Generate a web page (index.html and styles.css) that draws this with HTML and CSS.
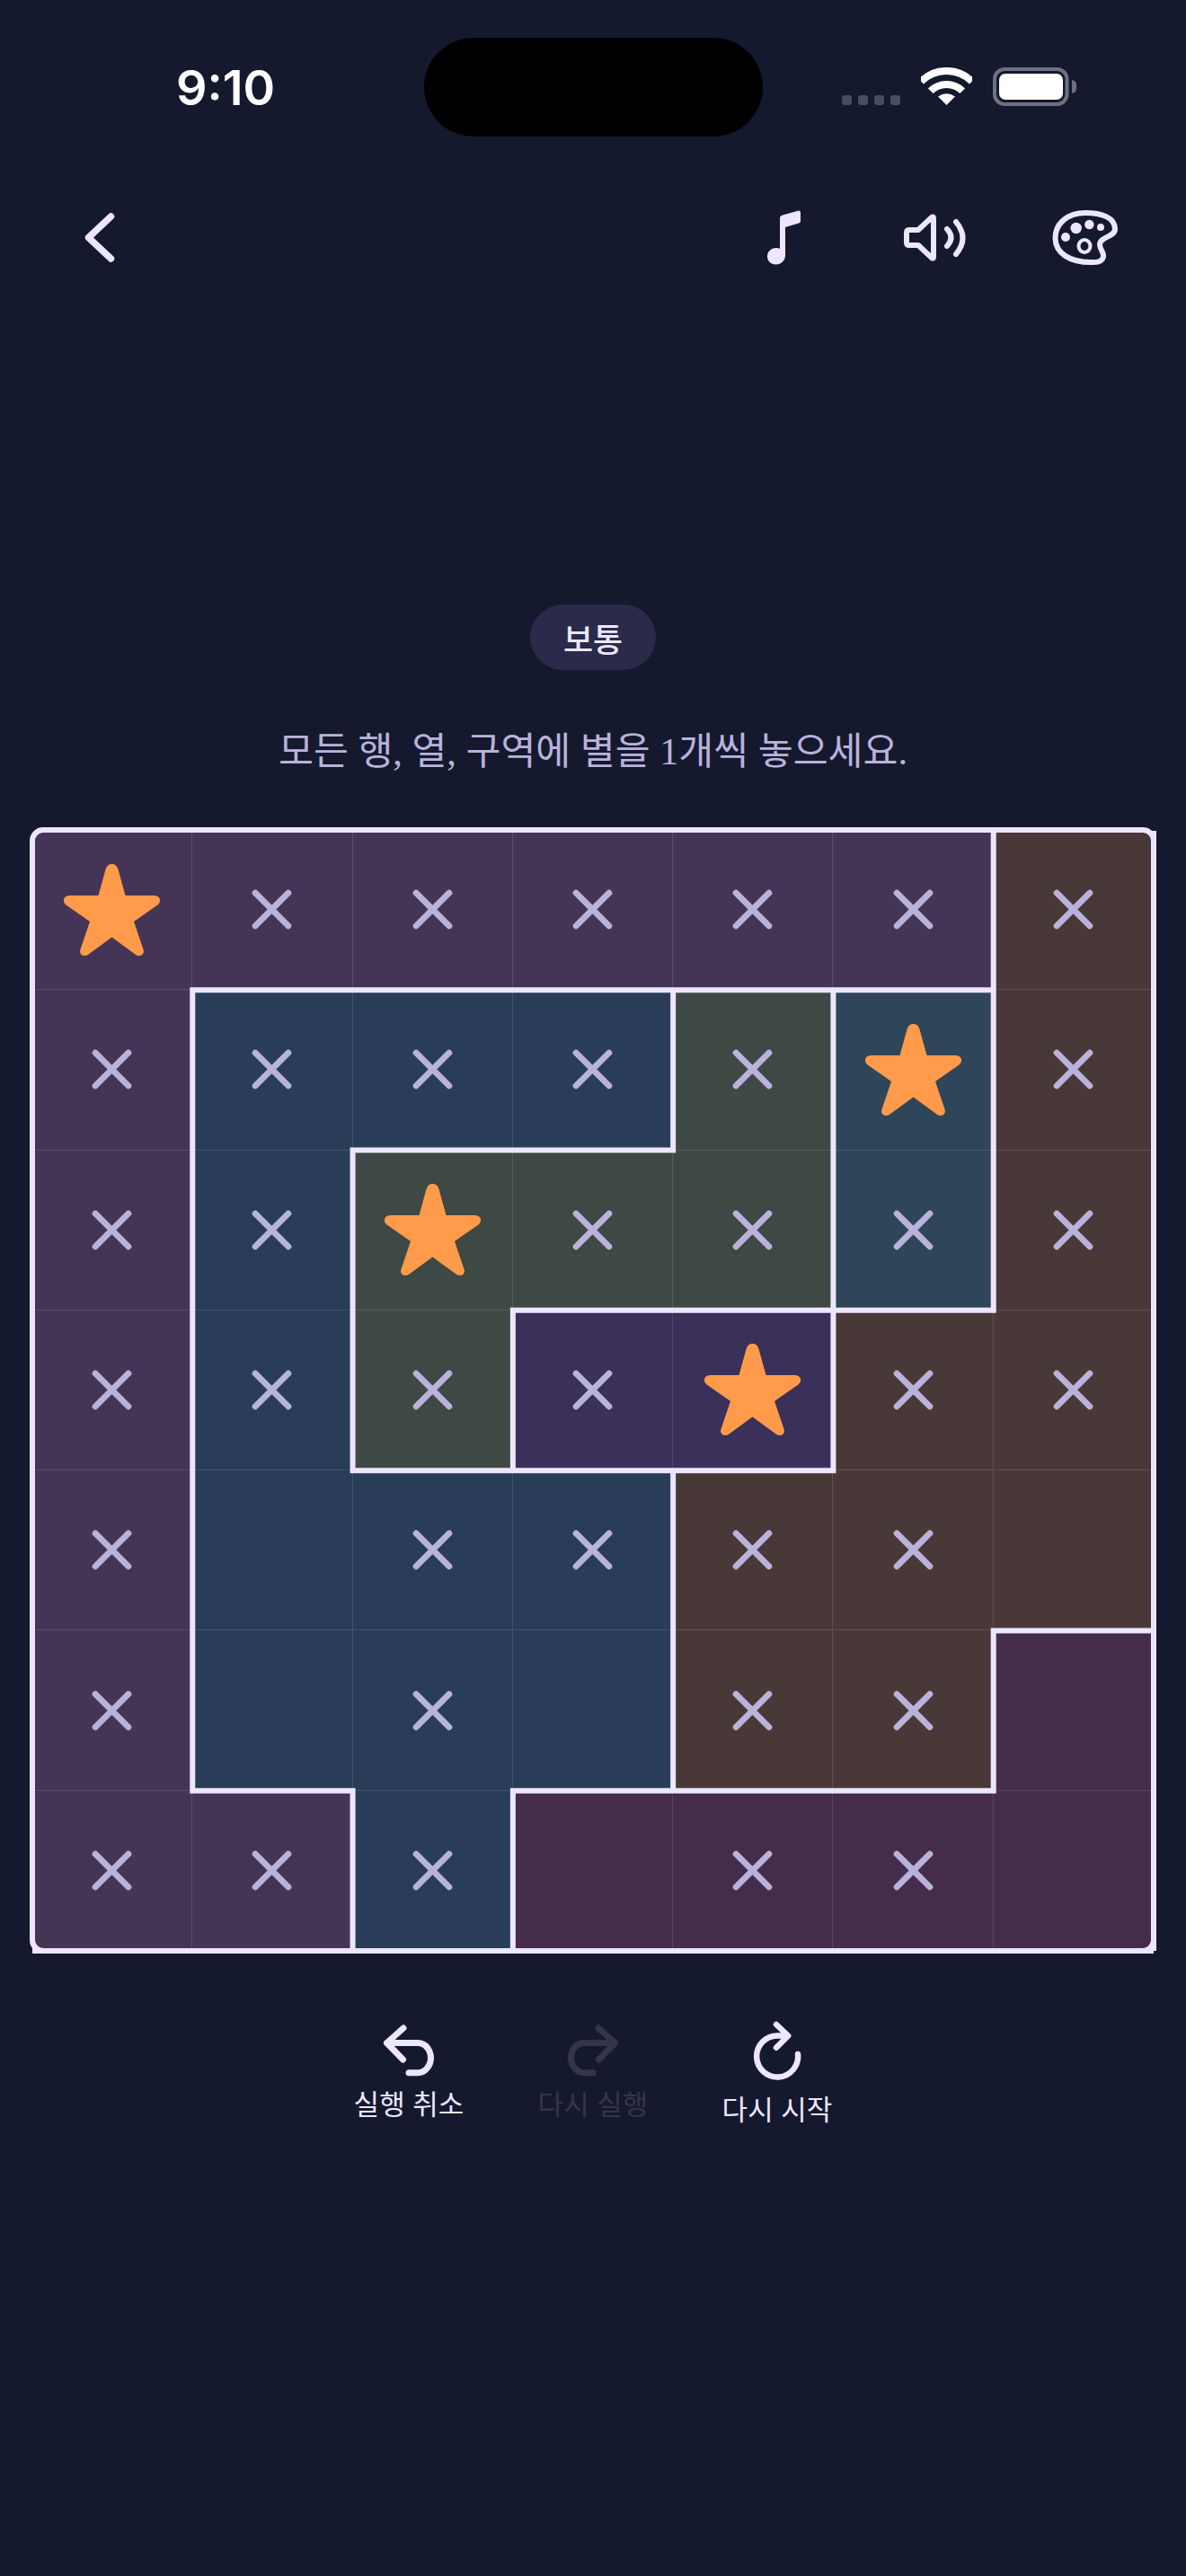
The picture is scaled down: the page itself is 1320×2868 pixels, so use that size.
FILE: index.html
```html
<!DOCTYPE html>
<html lang="ko">
<head>
<meta charset="utf-8">
<title>별 퍼즐</title>
<link rel="stylesheet" href="styles.css">
</head>
<body>
<svg class="defs" width="0" height="0" aria-hidden="true">
  <symbol id="x" viewBox="0 0 50 50"><path d="M7 7 L43 43 M43 7 L7 43" fill="none" stroke="currentColor" stroke-width="6.8" stroke-linecap="round"/></symbol>
  <symbol id="star" viewBox="0 0 107 102"><path d="M46.500 6 C48 1.500 50.500 0 53.500 0 C56.500 0 59 1.500 60.500 6 L68.500 35 H100 C107 35 109.500 41 104.500 45.500 L78 64 L88.500 95 C90.500 101 84.500 104 79.500 100.500 L53.500 81.500 L27.500 100.500 C22.500 104 16.500 101 18.500 95 L29 64 L2.500 45.500 C-2.500 41 0 35 7 35 H38.500 Z" fill="currentColor"/></symbol>
</svg>

<div class="status">
  <div class="time-slot"><span class="time">9:10</span></div>
  <div class="island"></div>
  <div class="status-icons">
    <div class="signal"><i></i><i></i><i></i><i></i></div>
    <svg class="wifi" viewBox="0 0 57 42"><path d="M0.2 15.7 A40 40 0 0 1 56.8 15.7 M10.8 26.3 A25 25 0 0 1 46.2 26.3" fill="none" stroke="#fff" stroke-width="8"/><path d="M28.5 42 L19 32.5 Q28.5 26 38 32.5 Z" fill="#fff"/></svg>
    <svg class="battery" viewBox="0 0 93 43"><rect x="2" y="2" width="80.500" height="39" rx="11" fill="none" stroke="#6f7183" stroke-width="4"/><rect x="7" y="7" width="71" height="29" rx="7" fill="#fff"/><path d="M88 14 Q93 15 93 19 V24 Q93 28 88 29 Z" fill="#6f7183"/></svg>
  </div>
</div>

<div class="toolbar">
  <svg class="tool tool-back" viewBox="0 0 84 84"><path d="M54.500 19 L29.500 42.500 L54.500 66" class="ln" stroke-width="7.500"/></svg>
  <svg class="tool tool-music" viewBox="0 0 84 84"><path d="M38 21 Q38 18 41 17.500 L58 12.700 Q61 12 61 15 V24 Q61 26 59 26.500 L44 31 V62 C44 68 39.500 72.500 33.500 72.500 C28 72.500 24 68.500 24 63.500 C24 58 28.500 54 34 54 Q36.500 54 38 55 Z" fill="#ece6ff"/></svg>
  <svg class="tool tool-sound" viewBox="0 0 84 84"><path d="M14 34 H24 L39 20 Q41 18.500 41 21 V64 Q41 66.500 39 65 L24 51 H14 Q11 51 11 48 V37 Q11 34 14 34 Z" class="ln" stroke-width="6"/><path d="M56 33 Q65 42.500 56 52 M66 25 Q81 43 66 61" class="ln" stroke-width="6"/></svg>
  <svg class="tool tool-palette" viewBox="0 0 84 84"><path d="M8.500 43 C8.500 26 23 15 42 15 C60 15 75 20 75 33 C75 42 59 41 58 50 C58 56 63 59 62 64 C61 69 55 70.500 48 70 C25 70 8.500 60 8.500 43 Z" class="ln" stroke-width="6"/><circle cx="20" cy="42" r="5" fill="#ece6ff"/><circle cx="31.700" cy="32" r="6.200" fill="#ece6ff"/><circle cx="46.400" cy="28" r="5.200" fill="#ece6ff"/><circle cx="59" cy="31" r="4" fill="#ece6ff"/><ellipse cx="41" cy="52" rx="6.500" ry="7" class="ln" stroke-width="4"/></svg>
</div>

<main class="main">
  <div class="pill">보통</div>
  <p class="prompt">모든 행, 열, 구역에 별을 1개씩 놓으세요.</p>

  <div class="board">
    <div class="grid">
      <div class="cell a tl"><svg class="star"><use href="#star"/></svg></div>
      <div class="cell a"><svg class="x"><use href="#x"/></svg></div>
      <div class="cell a"><svg class="x"><use href="#x"/></svg></div>
      <div class="cell a"><svg class="x"><use href="#x"/></svg></div>
      <div class="cell a"><svg class="x"><use href="#x"/></svg></div>
      <div class="cell a"><svg class="x"><use href="#x"/></svg></div>
      <div class="cell b tr"><svg class="x"><use href="#x"/></svg></div>

      <div class="cell a"><svg class="x"><use href="#x"/></svg></div>
      <div class="cell c"><svg class="x"><use href="#x"/></svg></div>
      <div class="cell c"><svg class="x"><use href="#x"/></svg></div>
      <div class="cell c"><svg class="x"><use href="#x"/></svg></div>
      <div class="cell d"><svg class="x"><use href="#x"/></svg></div>
      <div class="cell e"><svg class="star"><use href="#star"/></svg></div>
      <div class="cell b"><svg class="x"><use href="#x"/></svg></div>

      <div class="cell a"><svg class="x"><use href="#x"/></svg></div>
      <div class="cell c"><svg class="x"><use href="#x"/></svg></div>
      <div class="cell d"><svg class="star"><use href="#star"/></svg></div>
      <div class="cell d"><svg class="x"><use href="#x"/></svg></div>
      <div class="cell d"><svg class="x"><use href="#x"/></svg></div>
      <div class="cell e"><svg class="x"><use href="#x"/></svg></div>
      <div class="cell b"><svg class="x"><use href="#x"/></svg></div>

      <div class="cell a"><svg class="x"><use href="#x"/></svg></div>
      <div class="cell c"><svg class="x"><use href="#x"/></svg></div>
      <div class="cell d"><svg class="x"><use href="#x"/></svg></div>
      <div class="cell f"><svg class="x"><use href="#x"/></svg></div>
      <div class="cell f"><svg class="star"><use href="#star"/></svg></div>
      <div class="cell b"><svg class="x"><use href="#x"/></svg></div>
      <div class="cell b"><svg class="x"><use href="#x"/></svg></div>

      <div class="cell a"><svg class="x"><use href="#x"/></svg></div>
      <div class="cell c"></div>
      <div class="cell c"><svg class="x"><use href="#x"/></svg></div>
      <div class="cell c"><svg class="x"><use href="#x"/></svg></div>
      <div class="cell b"><svg class="x"><use href="#x"/></svg></div>
      <div class="cell b"><svg class="x"><use href="#x"/></svg></div>
      <div class="cell b"></div>

      <div class="cell a"><svg class="x"><use href="#x"/></svg></div>
      <div class="cell c"></div>
      <div class="cell c"><svg class="x"><use href="#x"/></svg></div>
      <div class="cell c"></div>
      <div class="cell b"><svg class="x"><use href="#x"/></svg></div>
      <div class="cell b"><svg class="x"><use href="#x"/></svg></div>
      <div class="cell g"></div>

      <div class="cell a bl"><svg class="x"><use href="#x"/></svg></div>
      <div class="cell a"><svg class="x"><use href="#x"/></svg></div>
      <div class="cell c"><svg class="x"><use href="#x"/></svg></div>
      <div class="cell g"></div>
      <div class="cell g"><svg class="x"><use href="#x"/></svg></div>
      <div class="cell g"><svg class="x"><use href="#x"/></svg></div>
      <div class="cell g br"></div>
    </div>
    <svg class="regions" viewBox="0 0 7 7" preserveAspectRatio="none">
      <path d="M1 1H6 M2 2H4 M3 3H6 M2 4H5 M6 5H7 M1 6H2 M3 6H6 M1 1V6 M2 2V4 M2 6V7 M3 3V4 M3 6V7 M4 1V2 M4 4V6 M5 1V4 M6 0V3 M6 5V6"/>
    </svg>
    <div class="frame"></div>
    <div class="edge edge-right"></div>
    <div class="edge edge-bottom"></div>
  </div>

  <div class="controls">
    <button class="ctl">
      <svg class="ctl-icon" viewBox="0 0 84 72"><path d="M36 11 L17.500 27.500 L35.500 46 M17.500 27.500 H52 C61 27.500 66.500 36 66.500 44 C66.500 53 60 60.700 52 60.700 H42" class="ln" stroke-width="7"/></svg>
      <span>실행 취소</span>
    </button>
    <button class="ctl ctl-off">
      <svg class="ctl-icon" viewBox="0 0 84 72"><path d="M48 11 L66.500 27.500 L48.500 46 M66.500 27.500 H32 C23 27.500 17.500 36 17.500 44 C17.500 53 24 60.700 32 60.700 H42" class="ln-off" stroke-width="7"/></svg>
      <span>다시 실행</span>
    </button>
    <button class="ctl">
      <svg class="ctl-icon ctl-tall" viewBox="0 0 84 78"><path d="M41 7 L54.200 19.500 L41 32.700 M54 19.500 H42 A23 23 0 1 0 65 40" class="ln" stroke-width="6.500"/></svg>
      <span>다시 시작</span>
    </button>
  </div>
</main>
</body>
</html>
```
FILE: styles.css
```css
* { box-sizing: border-box; }
html, body { margin: 0; padding: 0; }
body {
  width: 1320px;
  height: 2868px;
  overflow: hidden;
  background: #15192e;
  color: #ece6ff;
  font-family: "Inter", "Noto Sans CJK KR", sans-serif;
}
.defs { position: absolute; }

.ln { fill: none; stroke: #ece6ff; stroke-linecap: round; stroke-linejoin: round; }
.ln-off { fill: none; stroke: #33344e; stroke-linecap: round; stroke-linejoin: round; }

.status { display: flex; height: 152px; padding-top: 42px; }
.time-slot { width: 472px; padding-left: 196px; padding-top: 2px; display: flex; align-items: center; }
.time { font-size: 54px; font-weight: 600; line-height: 110px; color: #fff; letter-spacing: 0; }
.island { width: 377px; height: 110px; border-radius: 55px; background: #000; }
.status-icons { position: relative; flex: 1; height: 110px; }
.signal { position: absolute; left: 88px; top: 64px; display: flex; gap: 7px; }
.signal i { width: 11px; height: 11px; border-radius: 3px; background: #4a4d60; }
.wifi { position: absolute; left: 176px; top: 33px; width: 57px; height: 42px; }
.battery { position: absolute; left: 256px; top: 33px; width: 93px; height: 43px; }

.toolbar { display: flex; gap: 84px; height: 84px; margin-top: 70px; padding: 0 70px 0 69px; }
.tool { width: 84px; height: 84px; }
.tool-back { margin-right: auto; }

.main { display: flex; flex-direction: column; align-items: center; }
.pill {
  margin-top: 367px;
  width: 140px;
  height: 73px;
  border-radius: 37px;
  background: #2a2b4a;
  display: flex;
  align-items: center;
  justify-content: center;
  font-family: "Noto Sans CJK KR", sans-serif;
  font-size: 36px;
  font-weight: 500;
}
.prompt {
  margin: 63px 0 0;
  height: 56px;
  line-height: 56px;
  font-family: "Liberation Serif", "Noto Sans CJK KR", serif;
  font-size: 42.3px;
  color: #b9b3db;
  white-space: nowrap;
}

.board { position: relative; width: 1248px; height: 1248px; margin-top: 59px; align-self: flex-start; margin-left: 36px; }
.grid { display: grid; grid-template-columns: repeat(7, 1fr); grid-template-rows: repeat(7, 1fr); width: 100%; height: 100%; }
.cell {
  display: flex;
  align-items: center;
  justify-content: center;
  border-right: 1px solid rgba(255, 255, 255, .12);
  border-bottom: 1px solid rgba(255, 255, 255, .12);
}
.a { background: #443557; }
.b { background: #493838; }
.c { background: #293c58; }
.d { background: #3e4845; }
.e { background: #2f4559; }
.f { background: #3a3059; }
.g { background: #452c4a; }
.tl { border-top-left-radius: 12px; }
.tr { border-top-right-radius: 12px; }
.bl { border-bottom-left-radius: 12px; }
.br { border-bottom-right-radius: 12px; }
.x { width: 51px; height: 51px; color: #b9b3db; }
.star { width: 107px; height: 102px; color: #ff9b4a; }

.regions { position: absolute; inset: 0; width: 100%; height: 100%; overflow: visible; }
.regions path { fill: none; stroke: #ece6ff; stroke-width: .0337; stroke-linecap: square; }
.frame { position: absolute; inset: -3px; border: 6px solid #ece6ff; border-radius: 15px; }
.edge { position: absolute; background: #ece6ff; }
.edge-right { right: -3px; top: 1px; bottom: 0; width: 6px; }
.edge-bottom { left: 0; right: 0; bottom: -3px; height: 6px; }

.controls { display: flex; gap: 61px; margin-top: 75px; align-items: flex-start; }
.ctl {
  display: flex;
  flex-direction: column;
  align-items: center;
  width: 144px;
  padding: 0;
  border: 0;
  background: none;
  color: #ece6ff;
  font-family: "Noto Sans CJK KR", sans-serif;
  font-size: 31px;
  line-height: 40px;
  white-space: nowrap;
}
.ctl-off { color: #33344e; }
.ctl-icon { width: 84px; height: 72px; }
.ctl-tall { height: 78px; }
.ctl span { display: block; margin-top: 2px; }
```
